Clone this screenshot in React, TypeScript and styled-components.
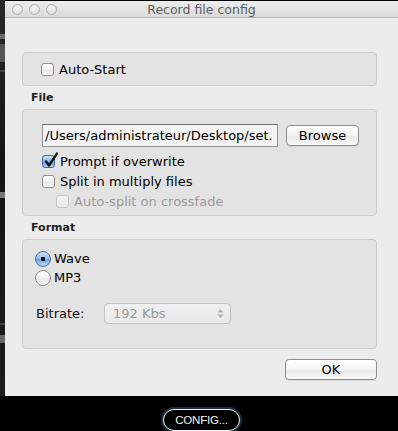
import React from 'react';
import styled, { createGlobalStyle } from 'styled-components';

const GlobalStyle = createGlobalStyle`
  html, body {
    margin: 0;
    padding: 0;
    background: #000;
    overflow: hidden;
  }
  body {
    font-family: "DejaVu Sans", "Liberation Sans", sans-serif;
  }
`;

const Desktop = styled.div`
  width: 398px;
  height: 431px;
  display: flex;
  flex-direction: column;
  background: #000;
`;

const TopRow = styled.div`
  display: flex;
  height: 398px;
`;

const SideStrip = styled.div`
  width: 5px;
  background: linear-gradient(#2a2a2a, #141414 40%, #1c1c1c);
  display: flex;
  flex-direction: column;
`;

const StripMark = styled.div<{ h: number; c: string; mt: number }>`
  height: ${(p) => p.h}px;
  margin-top: ${(p) => p.mt}px;
  background: ${(p) => p.c};
`;

const Window = styled.div`
  flex: 1;
  display: flex;
  flex-direction: column;
  margin-top: 1px;
  background: #ececec;
`;

const TitleBar = styled.div`
  height: 16px;
  display: flex;
  align-items: center;
  background: linear-gradient(#ededed, #dadada);
  border-bottom: 1px solid #b4b4b4;
`;

const Lights = styled.div`
  display: flex;
  gap: 6px;
  padding-left: 7px;
`;

const Light = styled.span`
  width: 11px;
  height: 11px;
  box-sizing: border-box;
  border-radius: 50%;
  border: 1px solid #adadad;
  background: radial-gradient(circle at 50% 35%, #f6f6f6, #d9d9d9);
`;

const Title = styled.div`
  flex: 1;
  text-align: center;
  margin-left: -52px;
  font-size: 12.5px;
  color: #5e5e5e;
`;

const Content = styled.div`
  flex: 1;
  display: flex;
  flex-direction: column;
  padding: 34px 21px 0 17px;
`;

const GroupBox = styled.div<{ h: number }>`
  width: 355px;
  height: ${(p) => p.h}px;
  box-sizing: border-box;
  background: #e3e3e3;
  border: 1px solid #cdcdcd;
  border-radius: 4px;
  display: flex;
  flex-direction: column;
`;

const SectionLabel = styled.div`
  font-size: 11px;
  font-weight: bold;
  color: #1e1e1e;
  padding-left: 9px;
  height: 23px;
  line-height: 21px;
  box-sizing: border-box;
  padding-top: 1px;
`;

const Row = styled.label<{ indent?: number; dim?: boolean; gap?: number; h?: number }>`
  display: flex;
  align-items: center;
  gap: ${(p) => p.gap ?? 5}px;
  height: ${(p) => p.h ?? 19}px;
  padding-left: ${(p) => p.indent || 0}px;
  font-size: 13px;
  color: ${(p) => (p.dim ? '#9a9a9a' : '#000')};
`;

const CheckBox = styled.span<{ on?: boolean; dim?: boolean }>`
  width: 13px;
  height: 13px;
  box-sizing: border-box;
  border-radius: 3px;
  border: 1px solid ${(p) => (p.on ? '#4c6c9c' : p.dim ? '#c6c6c6' : '#8e8e8e')};
  background: ${(p) =>
    p.on
      ? 'linear-gradient(#cde2f8, #7fb2ea 50%, #5d9ae0 51%, #a8d0f6)'
      : p.dim
      ? 'linear-gradient(#f4f4f4, #e9e9e9)'
      : 'linear-gradient(#ffffff, #f0f0f0 50%, #e6e6e6 51%, #fbfbfb)'};
  position: relative;
  flex: none;
`;

const Tick = styled.svg`
  position: absolute;
  left: 1px;
  top: -4px;
`;

const Radio = styled.span<{ on?: boolean }>`
  width: 16px;
  height: 16px;
  box-sizing: border-box;
  border-radius: 50%;
  border: 1px solid ${(p) => (p.on ? '#4d6d9b' : '#8b8b8b')};
  background: ${(p) =>
    p.on
      ? 'radial-gradient(circle, #000 0 2px, transparent 2.5px), linear-gradient(#d2e5f8, #87b8ec 50%, #6aa3e3 51%, #b7daf8)'
      : 'linear-gradient(#ffffff, #f2f2f2 50%, #e6e6e6 51%, #fcfcfc)'};
  flex: none;
`;

const PathRow = styled.div`
  display: flex;
  align-items: center;
  gap: 8px;
  margin: 14px 0 5px 19px;
`;

const PathField = styled.div`
  width: 236px;
  height: 23px;
  box-sizing: border-box;
  border: 1px solid #8f8f8f;
  border-top-color: #6f6f6f;
  background: #f3f3f3;
  font-size: 13px;
  line-height: 21px;
  padding-left: 2px;
  white-space: nowrap;
  overflow: hidden;
  color: #000;
`;

const PushButton = styled.button<{ w: number }>`
  width: ${(p) => p.w}px;
  height: 21px;
  box-sizing: border-box;
  border: 1px solid #8d8d8d;
  border-radius: 4px;
  background: linear-gradient(#ffffff, #f3f3f3 50%, #e8e8e8 51%, #f8f8f8);
  font-family: "DejaVu Sans", sans-serif;
  font-size: 13px;
  color: #000;
  padding: 0;
  box-shadow: 0 1px 0 rgba(0, 0, 0, 0.08);
`;

const ChecksList = styled.div`
  display: flex;
  flex-direction: column;
  padding-left: 19px;
  gap: 1px;
`;

const RadioList = styled.div`
  display: flex;
  flex-direction: column;
  padding: 9px 0 0 12px;
  gap: 0;
`;

const BitrateRow = styled.div`
  display: flex;
  align-items: center;
  margin: 16px 0 0 13px;
  font-size: 13px;
  color: #111;
`;

const BitrateLabel = styled.span`
  width: 68px;
`;

const Popup = styled.div`
  width: 127px;
  height: 21px;
  box-sizing: border-box;
  border: 1px solid #c3c3c3;
  border-radius: 4px;
  background: linear-gradient(#f0f0f0, #e9e9e9);
  display: flex;
  align-items: center;
  justify-content: space-between;
  padding: 0 6px 0 8px;
  font-size: 13px;
  color: #9a9a9a;
`;

const Footer = styled.div`
  display: flex;
  justify-content: flex-end;
  width: 355px;
  margin-top: 10px;
`;

const BottomBar = styled.div`
  flex: 1;
  display: flex;
  justify-content: center;
  padding-top: 13px;
  padding-left: 5px;
`;

const ConfigButton = styled.div`
  height: 20px;
  padding: 0 11px;
  border-radius: 11px;
  border: 1.5px solid #f2f2f2;
  box-shadow: 0 0 0 2px #183038;
  background: #000;
  color: #f5f5f5;
  font-family: "Liberation Sans", sans-serif;
  font-size: 11.5px;
  line-height: 20px;
  letter-spacing: -0.2px;
`;

const App: React.FC = () => (
  <Desktop>
    <GlobalStyle />
    <TopRow>
      <SideStrip>
        <StripMark h={5} c="#6a6a6a" mt={34} />
        <StripMark h={18} c="#555" mt={5} />
        <StripMark h={2} c="#444" mt={8} />
        <StripMark h={6} c="#777" mt={120} />
        <StripMark h={2} c="#444" mt={125} />
        <StripMark h={8} c="#666" mt={10} />
      </SideStrip>
      <Window>
        <TitleBar>
          <Lights>
            <Light />
            <Light />
            <Light />
          </Lights>
          <Title>Record file config</Title>
        </TitleBar>
        <Content>
          <GroupBox h={34}>
            <Row indent={18} h={32}>
              <CheckBox />
              Auto-Start
            </Row>
          </GroupBox>
          <SectionLabel>File</SectionLabel>
          <GroupBox h={107}>
            <PathRow>
              <PathField>/Users/administrateur/Desktop/set.</PathField>
              <PushButton w={73}>Browse</PushButton>
            </PathRow>
            <ChecksList>
              <Row>
                <CheckBox on>
                  <Tick width="15" height="16" viewBox="0 0 15 16">
                    <path d="M2 9.5 L5 13.5 L13 1.5" fill="none" stroke="#111" strokeWidth="2.3" strokeLinecap="round" strokeLinejoin="round" />
                  </Tick>
                </CheckBox>
                Prompt if overwrite
              </Row>
              <Row>
                <CheckBox />
                Split in multiply files
              </Row>
              <Row indent={14} dim>
                <CheckBox dim />
                Auto-split on crossfade
              </Row>
            </ChecksList>
          </GroupBox>
          <SectionLabel>Format</SectionLabel>
          <GroupBox h={110}>
            <RadioList>
              <Row gap={3}>
                <Radio on />
                Wave
              </Row>
              <Row gap={3}>
                <Radio />
                MP3
              </Row>
            </RadioList>
            <BitrateRow>
              <BitrateLabel>Bitrate:</BitrateLabel>
              <Popup>
                192 Kbs
                <svg width="7" height="11" viewBox="0 0 7 11">
                  <path d="M3.5 1 L6.5 4.5 H0.5 Z M3.5 10 L6.5 6.5 H0.5 Z" fill="#b0b0b0" />
                </svg>
              </Popup>
            </BitrateRow>
          </GroupBox>
          <Footer>
            <PushButton w={92}>OK</PushButton>
          </Footer>
        </Content>
      </Window>
    </TopRow>
    <BottomBar>
      <ConfigButton>CONFIG...</ConfigButton>
    </BottomBar>
  </Desktop>
);

export default App;
